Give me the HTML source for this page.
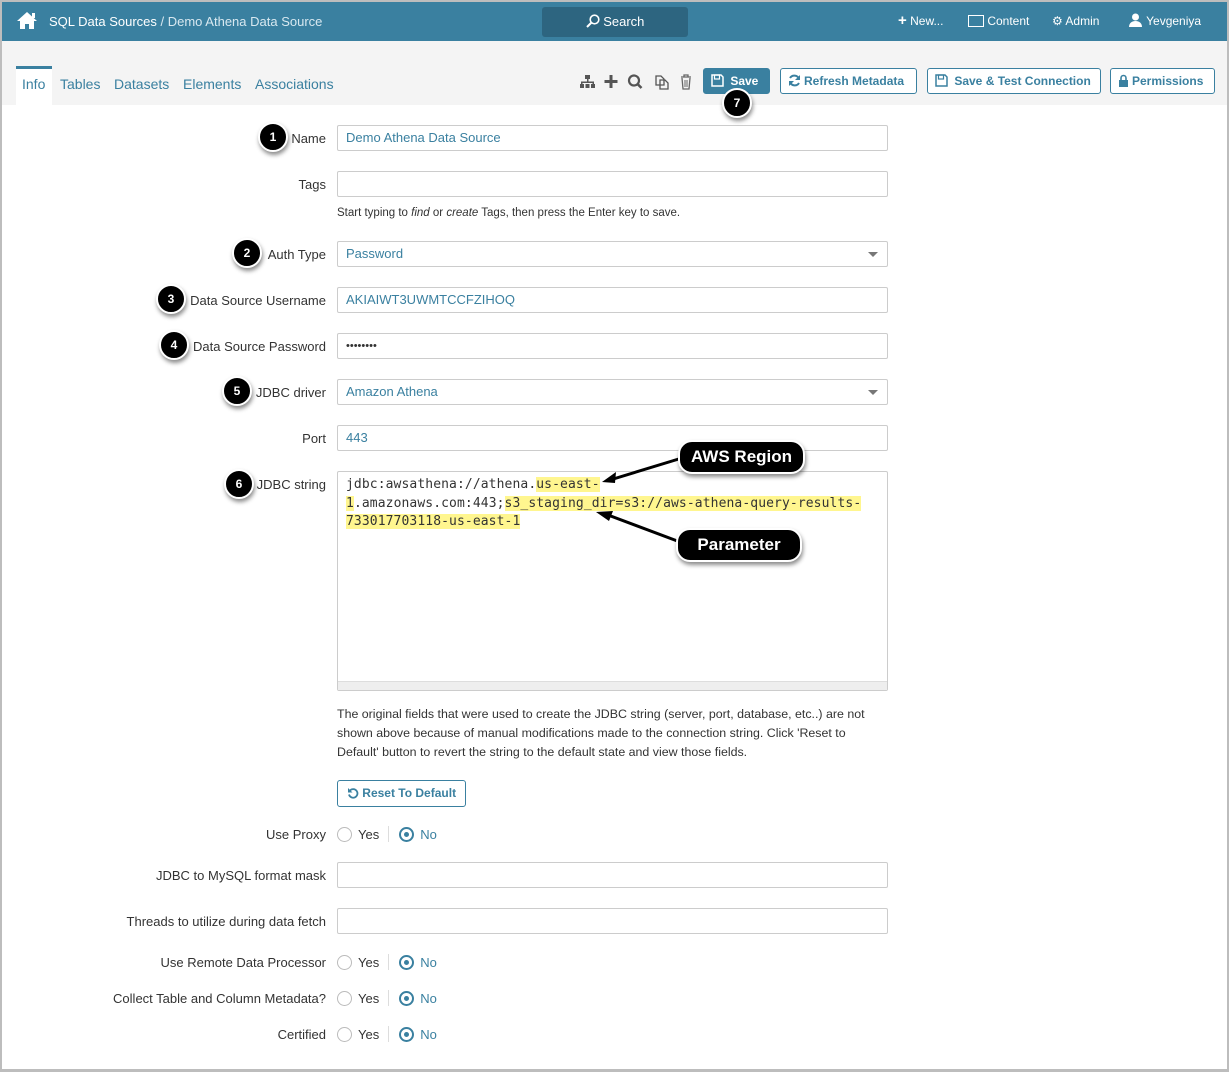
<!DOCTYPE html>
<html><head><meta charset="utf-8">
<style>
*{box-sizing:border-box;margin:0;padding:0}
body{width:1229px;height:1072px;overflow:hidden;background:#fff;font-family:"Liberation Sans",sans-serif;font-size:13px;color:#333;position:relative}
.frame{position:absolute;left:0;top:0;width:1229px;height:1072px;border:2px solid #bdbdbd;border-bottom-width:3px;pointer-events:none;z-index:50}
.hdr{position:absolute;left:0;top:0;width:1229px;height:41px;background:#3a80a0;color:#fff}
.sub{position:absolute;left:0;top:41px;width:1229px;height:64px;background:#f4f4f4}
.a{position:absolute}
.lbl{position:absolute;right:903px;font-size:13px;color:#333;text-align:right;white-space:nowrap}
.inp{position:absolute;left:337px;width:551px;height:26px;border:1px solid #ccc;border-radius:2px;padding:0 8px;line-height:24px;color:#3a80a0;font-size:13px;background:#fff}
.caret{position:absolute;right:9px;top:10px;border-left:5px solid transparent;border-right:5px solid transparent;border-top:5px solid #777}
.badge{position:absolute;width:30px;height:30px;border-radius:50%;background:#000;border:2px solid #fff;box-shadow:1px 3px 4px rgba(0,0,0,.45);color:#fff;font-weight:bold;font-size:12px;text-align:center;line-height:26px;z-index:10}
.btn{position:absolute;top:68px;height:26px;border:1px solid #3a80a0;border-radius:3px;color:#3a80a0;font-weight:bold;font-size:12px;line-height:24px;padding:0 7px;background:#fff;white-space:nowrap}
.btn svg{vertical-align:-2px;margin-right:3px}
.tab{position:absolute;top:76px;font-size:14px;color:#3a80a0}
.radio{position:absolute;left:337px;font-size:13px;white-space:nowrap}
.r{display:inline-block;width:15px;height:15px;border:1px solid #bbb;border-radius:50%;vertical-align:-3px;margin-right:6px;position:relative}
.r.on{border:2px solid #3a80a0}
.r.on:after{content:"";position:absolute;left:3px;top:3px;width:5px;height:5px;border-radius:50%;background:#3a80a0}
.sep{display:inline-block;width:1px;height:16px;background:#ddd;vertical-align:-3px;margin:0 10px 0 9px}
.call{position:absolute;background:#000;color:#fff;font-weight:bold;font-size:17px;border:2px solid #fff;border-radius:14px;box-shadow:1px 3px 4px rgba(0,0,0,.45);text-align:center;line-height:30px;height:34px;z-index:10;font-family:"Liberation Sans",sans-serif}
.mono{font-family:"DejaVu Sans Mono","Liberation Mono",monospace;font-size:13px;color:#333;line-height:18.5px;letter-spacing:0.1px}
.hl{background:#fff68f}
</style></head><body>
<div class="hdr">
 <svg class="a" style="left:16px;top:11px" width="22" height="19" viewBox="0 0 22 19"><path d="M11 1L1 10h3v8h5v-5h4v5h5v-8h3z" fill="#fff"/><rect x="16" y="2" width="3" height="5" fill="#fff"/></svg>
 <div class="a" style="left:49px;top:14px;font-size:13px">SQL Data Sources <span style="color:#d8e8f0">/ Demo Athena Data Source</span></div>
 <div class="a" style="left:542px;top:7px;width:146px;height:30px;background:#2d6580;border-radius:3px;text-align:center;line-height:30px;font-size:13px"><svg width="14" height="14" viewBox="0 0 14 14" style="vertical-align:-2px"><circle cx="8.5" cy="5.5" r="4.3" fill="none" stroke="#fff" stroke-width="1.6"/><path d="M5.5 8.5L1 13" stroke="#fff" stroke-width="2"/></svg> Search</div>
 <div class="a" style="left:898px;top:14px;font-size:12px"><b style="font-size:15px;line-height:12px">+</b> New...</div>
 <div class="a" style="left:968px;top:14px;font-size:12px"><span style="display:inline-block;width:16px;height:12px;border:1.5px solid #fff;vertical-align:-2px"></span> Content</div>
 <div class="a" style="left:1052px;top:14px;font-size:12px">⚙ Admin</div>
 <div class="a" style="left:1128px;top:13px;font-size:12px"><svg width="15" height="14" viewBox="0 0 15 14" style="vertical-align:-2px"><circle cx="7.5" cy="4" r="3.5" fill="#fff"/><path d="M1 14c0-4 3-6 6.5-6s6.5 2 6.5 6z" fill="#fff"/></svg> Yevgeniya</div>
</div>
<div class="sub"></div>
<div class="a" style="left:16px;top:66px;width:36px;height:40px;background:#fff;border-top:3px solid #3a80a0"></div>
<div class="tab" style="left:22px;color:#3a80a0">Info</div>
<div class="tab" style="left:60px">Tables</div>
<div class="tab" style="left:114px">Datasets</div>
<div class="tab" style="left:183px">Elements</div>
<div class="tab" style="left:255px">Associations</div>
<svg class="a" style="left:579px;top:73px" width="115" height="18" viewBox="0 0 115 18">
 <g fill="#555"><rect x="6" y="2" width="5" height="4"/><rect x="8" y="6" width="1.5" height="3"/><rect x="2" y="8.5" width="13" height="1.5"/><rect x="2" y="8.5" width="1.5" height="3"/><rect x="13.5" y="8.5" width="1.5" height="3"/><rect x="1" y="11" width="4" height="4"/><rect x="6.5" y="11" width="4" height="4"/><rect x="12" y="11" width="4" height="4"/></g>
 <path d="M32 2v13M25.5 8.5h13" stroke="#555" stroke-width="3"/>
 <circle cx="55" cy="7.5" r="5" fill="none" stroke="#555" stroke-width="2.2"/><path d="M58.5 11l4 4" stroke="#555" stroke-width="2.6"/>
 <path d="M77 3h5l3 3v6h-8z M81 7h5l3 3v6h-8z" fill="none" stroke="#555" stroke-width="1.3"/>
 <path d="M102 4h10M105 4V2h4v2M103 5l1 11h6l1-11" fill="none" stroke="#666" stroke-width="1.3"/><path d="M106 7v7M108 7v7" stroke="#666"/>
</svg>
<div class="btn" style="left:703px;width:67px;background:#3a80a0;color:#fff"><svg width="13" height="13" viewBox="0 0 13 13"><path d="M1 1h9l2 2v9H1z" fill="none" stroke="#fff" stroke-width="1.5"/><rect x="3.5" y="1" width="5" height="4" fill="none" stroke="#fff" stroke-width="1.2"/></svg> Save</div>
<div class="btn" style="left:780px;width:137px"><svg width="13" height="13" viewBox="0 0 13 13"><path d="M11 5A5 5 0 0 0 2 4M2 8a5 5 0 0 0 9 1" fill="none" stroke="#3a80a0" stroke-width="2"/><path d="M12 1v5H7zM1 12V7h5z" fill="#3a80a0"/></svg>Refresh Metadata</div>
<div class="btn" style="left:927px;width:174px"><svg width="13" height="13" viewBox="0 0 13 13"><path d="M1 1h9l2 2v9H1z" fill="none" stroke="#3a80a0" stroke-width="1.5"/><rect x="3.5" y="1" width="5" height="4" fill="none" stroke="#3a80a0" stroke-width="1.2"/></svg> Save &amp; Test Connection</div>
<div class="btn" style="left:1110px;width:105px"><svg width="11" height="13" viewBox="0 0 11 13"><path d="M3 6V4a2.5 2.5 0 0 1 5 0v2" fill="none" stroke="#3a80a0" stroke-width="1.6"/><rect x="1" y="6" width="9" height="7" fill="#3a80a0"/></svg>Permissions</div>
<div class="badge" style="left:722px;top:88px">7</div>

<div class="lbl" style="top:131px">Name</div><div class="inp" style="top:125px">Demo Athena Data Source</div>
<div class="badge" style="left:258px;top:122px">1</div>
<div class="lbl" style="top:177px">Tags</div><div class="inp" style="top:171px"></div>
<div class="a" style="left:337px;top:207px;font-size:11.5px">Start typing to <i>find</i> or <i>create</i> Tags, then press the Enter key to save.</div>
<div class="lbl" style="top:247px">Auth Type</div><div class="inp" style="top:241px">Password<div class="caret"></div></div>
<div class="badge" style="left:232px;top:238px">2</div>
<div class="lbl" style="top:293px">Data Source Username</div><div class="inp" style="top:287px">AKIAIWT3UWMTCCFZIHOQ</div>
<div class="badge" style="left:156px;top:284px">3</div>
<div class="lbl" style="top:339px">Data Source Password</div><div class="inp" style="top:333px;font-size:11px;color:#333">••••••••</div>
<div class="badge" style="left:159px;top:330px">4</div>
<div class="lbl" style="top:385px">JDBC driver</div><div class="inp" style="top:379px">Amazon Athena<div class="caret"></div></div>
<div class="badge" style="left:222px;top:376px">5</div>
<div class="lbl" style="top:431px">Port</div><div class="inp" style="top:425px">443</div>
<div class="lbl" style="top:477px">JDBC string</div>
<div class="badge" style="left:224px;top:469px">6</div>
<div class="inp" style="top:471px;height:220px;padding:4px 8px">
 <div class="mono">jdbc:awsathena://athena.<span class="hl">us-east-</span><br><span class="hl">1</span>.amazonaws.com:443;<span class="hl">s3_staging_dir=s3://aws-athena-query-results-</span><br><span class="hl">733017703118-us-east-1</span></div>
 <div class="a" style="left:0;right:0;bottom:0;height:9px;background:#eee;border-top:1px solid #ddd"></div>
</div>
<svg class="a" style="left:590px;top:450px;z-index:9" width="100" height="100"><path d="M92 8L20 30" stroke="#000" stroke-width="3"/><path d="M12 32l14-10-1 11z" fill="#000"/><path d="M90 92L18 65" stroke="#000" stroke-width="3"/><path d="M6 62l17-1-4 10z" fill="#000"/></svg>
<div class="call" style="left:678px;top:440px;width:127px">AWS Region</div>
<div class="call" style="left:676px;top:528px;width:126px">Parameter</div>
<div class="a" style="left:337px;top:705px;width:545px;font-size:12.4px;line-height:19px">The original fields that were used to create the JDBC string (server, port, database, etc..) are not shown above because of manual modifications made to the connection string. Click 'Reset to Default' button to revert the string to the default state and view those fields.</div>
<div class="a" style="left:337px;top:780px;width:129px;height:27px;border:1px solid #3a80a0;border-radius:3px;color:#3a80a0;font-weight:bold;font-size:12px;line-height:25px;text-align:center"><svg width="12" height="12" viewBox="0 0 12 12" style="vertical-align:-2px"><path d="M3 3.5A4.3 4.3 0 1 1 2 7.5" fill="none" stroke="#3a80a0" stroke-width="1.8"/><path d="M1 1v4.5h4.5z" fill="#3a80a0"/></svg> Reset To Default</div>
<div class="lbl" style="top:827px">Use Proxy</div>
<div class="radio" style="top:826px"><span class="r"></span>Yes<span class="sep"></span><span class="r on"></span><span style="color:#3a80a0">No</span></div>
<div class="lbl" style="top:868px">JDBC to MySQL format mask</div><div class="inp" style="top:862px"></div>
<div class="lbl" style="top:914px">Threads to utilize during data fetch</div><div class="inp" style="top:908px"></div>
<div class="lbl" style="top:955px">Use Remote Data Processor</div>
<div class="radio" style="top:954px"><span class="r"></span>Yes<span class="sep"></span><span class="r on"></span><span style="color:#3a80a0">No</span></div>
<div class="lbl" style="top:991px">Collect Table and Column Metadata?</div>
<div class="radio" style="top:990px"><span class="r"></span>Yes<span class="sep"></span><span class="r on"></span><span style="color:#3a80a0">No</span></div>
<div class="lbl" style="top:1027px">Certified</div>
<div class="radio" style="top:1026px"><span class="r"></span>Yes<span class="sep"></span><span class="r on"></span><span style="color:#3a80a0">No</span></div>
<div class="frame"></div>
</body></html>
